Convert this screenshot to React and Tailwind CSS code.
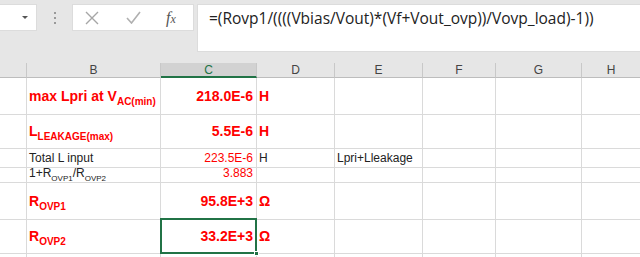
import React from "react";

const GRID = "grid grid-cols-[27px_134px_96px_78px_88px_73px_86px_1fr]";
const CELL = "border-r border-b border-[#dadada] flex items-center overflow-visible whitespace-nowrap";
const HEAD = ["", "B", "C", "D", "E", "F", "G", "H"];

function Sub({ children, className = "" }) {
  return <span className={`relative top-[4px] ${className}`}>{children}</span>;
}

function Cell({ children, className = "" }) {
  return <div className={`${CELL} ${className}`}>{children}</div>;
}

function Row({ h, b, c, d, e, selected }) {
  return (
    <div className={`${GRID} ${h}`}>
      <Cell />
      <Cell className="pl-[2px]">{b}</Cell>
      <Cell className={`justify-end pr-[3px] ${selected ? "relative" : ""}`}>
        {c}
        {selected && (
          <>
            <div className="absolute -left-[1px] -top-[2px] right-[-1px] bottom-[-1px] border-2 border-[#217346]" />
            <div className="absolute right-[-3px] bottom-[-3px] w-[5px] h-[5px] bg-[#217346] border border-white" />
          </>
        )}
      </Cell>
      <Cell className="pl-[2px]">{d}</Cell>
      <Cell className="pl-[2px]">{e}</Cell>
      <Cell />
      <Cell />
      <Cell className="border-r-0" />
    </div>
  );
}

const big = "text-[14px] font-bold text-[#ff0000]";
const small = "text-[12px] text-[#222]";

export default function App() {
  return (
    <div className="w-[640px] h-[257px] overflow-hidden bg-white font-['Liberation_Sans',Arial,sans-serif]">
      {/* formula bar */}
      <div className="h-[63px] bg-[#e6e6e6] flex items-start pt-[4px]">
        <div className="w-[37px] h-[27px] bg-white border border-[#dcdcdc] border-l-0 flex items-center justify-end pr-[8px]">
          <div className="w-0 h-0 border-l-[3px] border-r-[3px] border-t-[3px] border-l-transparent border-r-transparent border-t-[#555]" />
        </div>
        <div className="w-[35px] h-[27px] flex flex-col items-center justify-center gap-[3px]">
          <div className="w-[2px] h-[2px] bg-[#999]" />
          <div className="w-[2px] h-[2px] bg-[#999]" />
          <div className="w-[2px] h-[2px] bg-[#999]" />
        </div>
        <div className="w-[122px] h-[27px] bg-white border border-[#dcdcdc] flex items-center">
          <svg className="ml-[12px]" width="14" height="14" viewBox="0 0 14 14">
            <path d="M1 1 L13 13 M13 1 L1 13" stroke="#a6a6a6" strokeWidth="1.4" fill="none" />
          </svg>
          <svg className="ml-[27px]" width="15" height="13" viewBox="0 0 15 13">
            <path d="M1 7 L5.5 12 L14 1" stroke="#b0b0b0" strokeWidth="1.6" fill="none" />
          </svg>
          <span className="ml-[25px] text-[16px] italic text-[#555] font-['Liberation_Serif',serif] leading-none">
            f<span className="text-[12px]">x</span>
          </span>
        </div>
        <div className="ml-[3px] flex-1 h-[48px] bg-white border border-[#dcdcdc] border-r-0 pl-[11px] pt-[2px] text-[15.5px] text-[#222] font-['Open_Sans',sans-serif]">
          =(Rovp1/((((Vbias/Vout)*(Vf+Vout_ovp))/Vovp_load)-1))
        </div>
      </div>

      {/* column headers */}
      <div className={`${GRID} h-[15px] bg-[#e6e6e6]`}>
        {HEAD.map((l, i) => (
          <div
            key={i}
            className={`flex items-center justify-center text-[12px] leading-none border-b border-[#bdbdbd] ${
              i === 7 ? "" : "border-r border-r-[#c8c8c8]"
            } ${i === 2 ? "bg-[#d2d2d2] text-[#217346] border-b-2 border-b-[#217346]" : "text-[#444]"}`}
          >
            {l}
          </div>
        ))}
      </div>

      <Row
        h="h-[37px]"
        b={<span className={big}>max Lpri at V<Sub className="text-[10px]">AC(min)</Sub></span>}
        c={<span className={big}>218.0E-6</span>}
        d={<span className={big}>H</span>}
      />
      <Row
        h="h-[34px]"
        b={<span className={big}>L<Sub className="text-[10px]">LEAKAGE(max)</Sub></span>}
        c={<span className={big}>5.5E-6</span>}
        d={<span className={big}>H</span>}
      />
      <Row
        h="h-[15px]"
        b={<span className={small}>Total L input</span>}
        c={<span className="text-[12px] text-[#ff0000]">223.5E-6</span>}
        d={<span className={small}>H</span>}
        e={<span className={small}>Lpri+Lleakage</span>}
      />
      <Row
        h="h-[19px]"
        b={
          <span className={small}>
            1+R<Sub className="text-[8px] top-[3px]">OVP1</Sub>/R<Sub className="text-[8px] top-[3px]">OVP2</Sub>
          </span>
        }
        c={<span className="text-[12px] text-[#ff0000]">3.883</span>}
      />
      <Row
        h="h-[37px]"
        b={<span className={big}>R<Sub className="text-[10px]">OVP1</Sub></span>}
        c={<span className={big}>95.8E+3</span>}
        d={<span className={big}>Ω</span>}
      />
      <Row
        h="h-[34px]"
        selected
        b={<span className={big}>R<Sub className="text-[10px]">OVP2</Sub></span>}
        c={<span className={big}>33.2E+3</span>}
        d={<span className={big}>Ω</span>}
      />
      <Row h="h-[20px]" />
    </div>
  );
}
